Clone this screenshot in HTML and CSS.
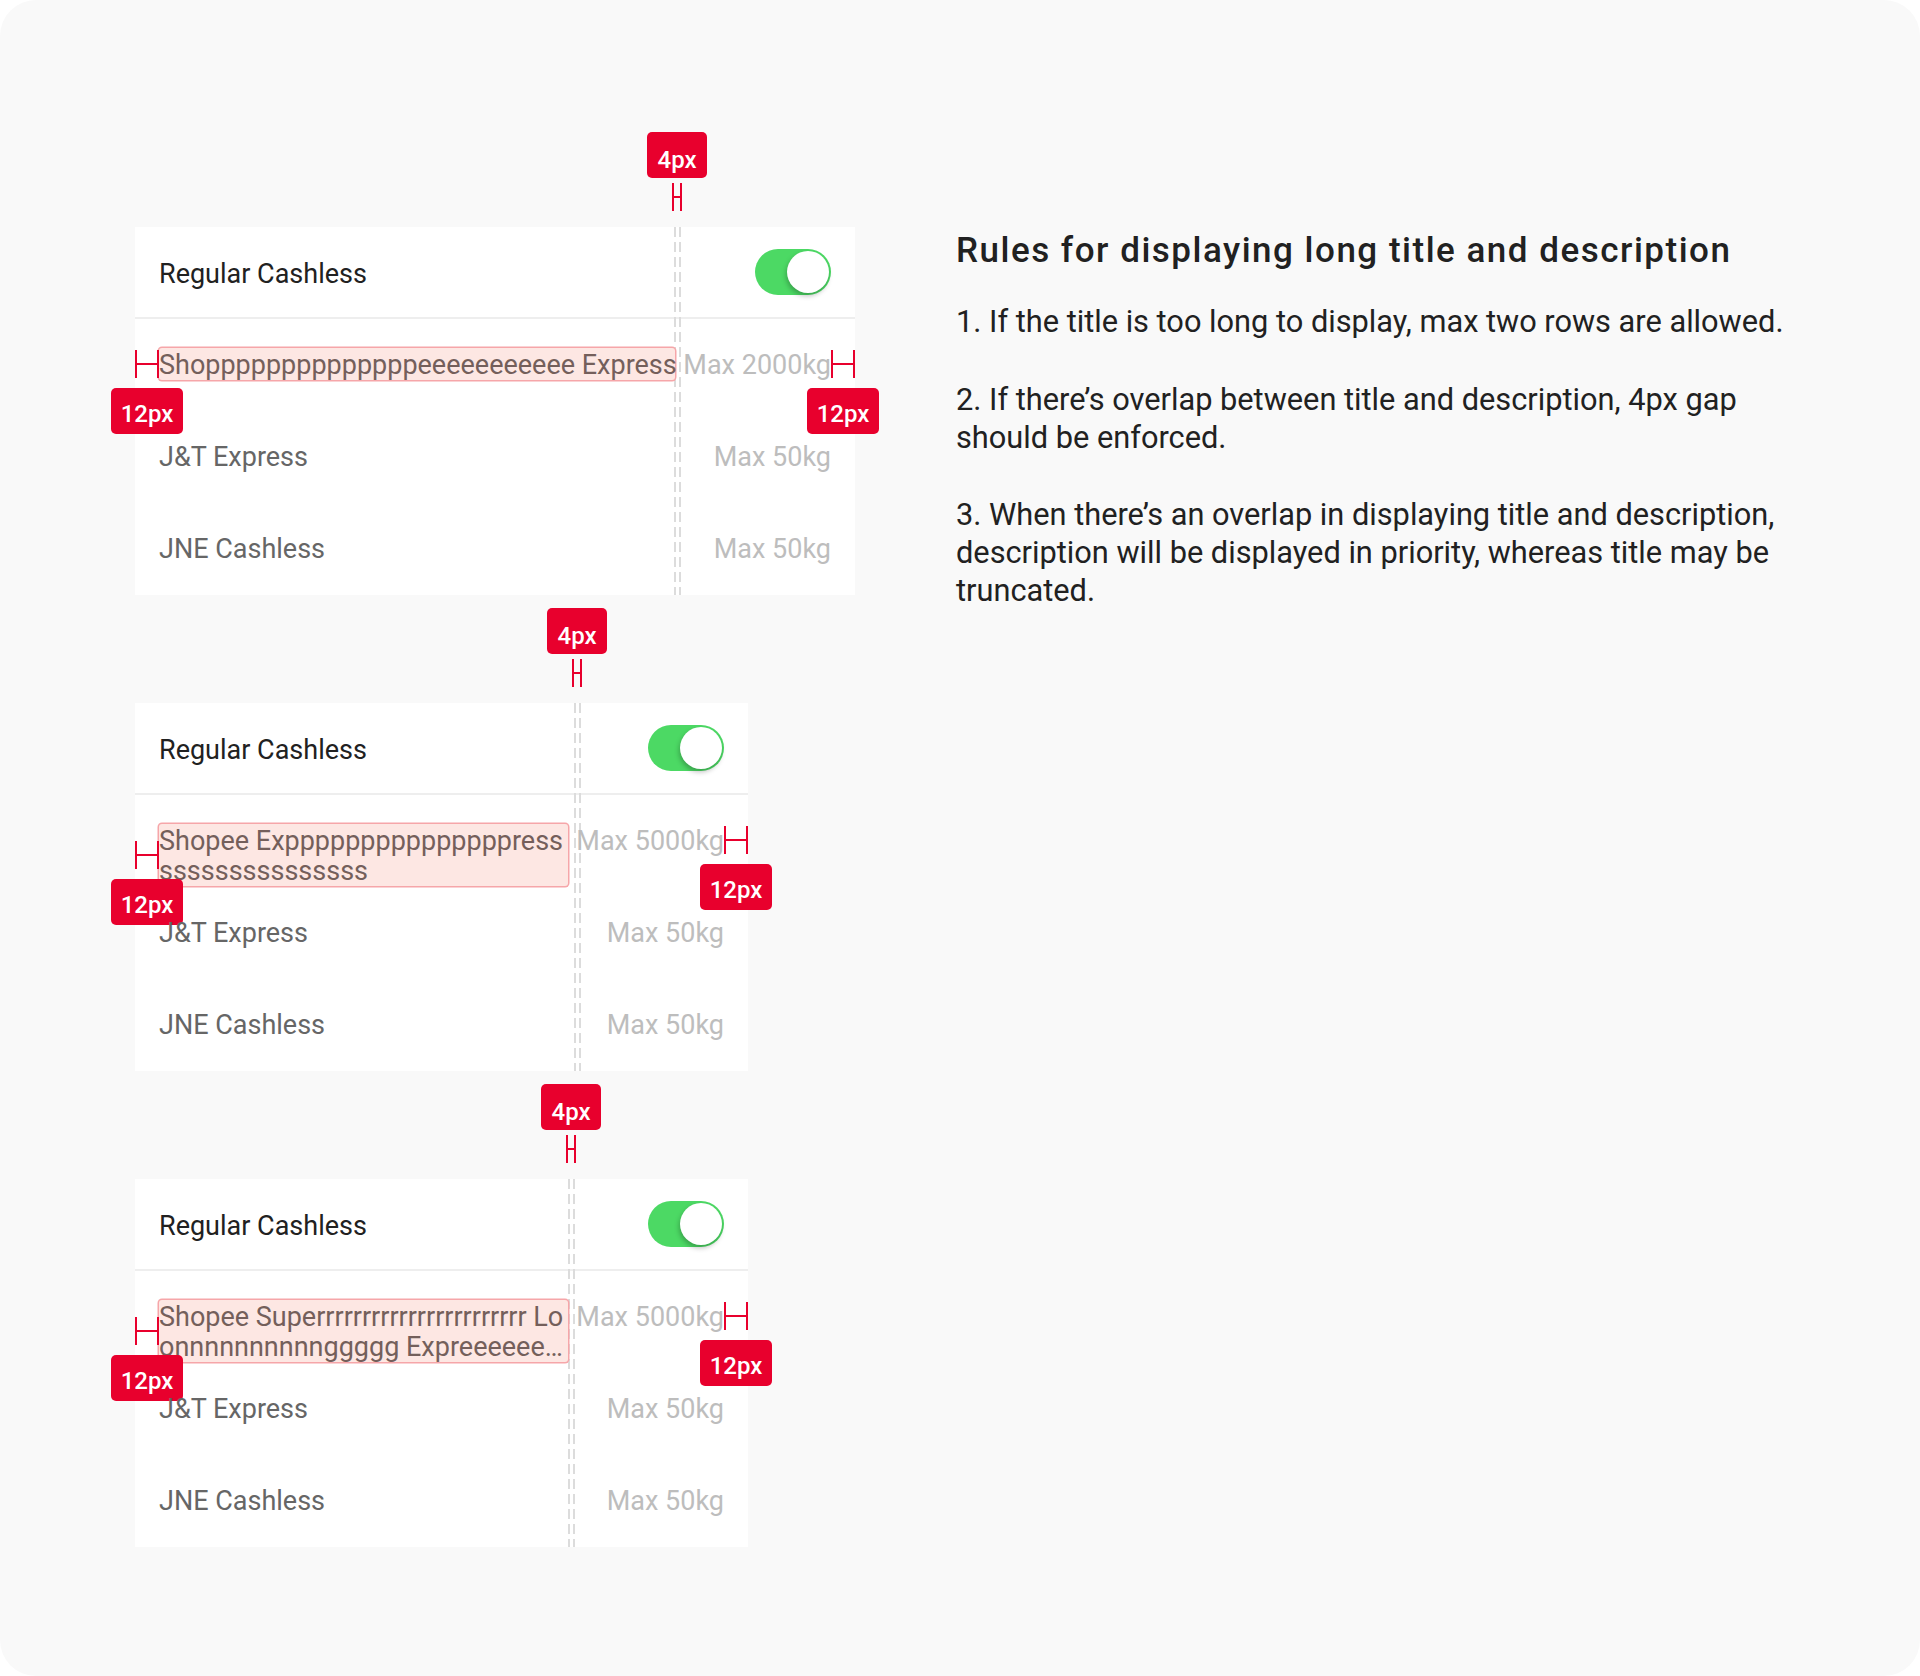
FILE: index.html
```html
<!DOCTYPE html>
<html lang="en">
<head>
  <meta charset="UTF-8">
  <meta name="viewport" content="width=device-width, initial-scale=1.0">
  <title>Long title and description rules</title>
  <link rel="stylesheet" href="styles.css">
</head>
<body>
  <div class="canvas">
    <div class="layout">
      <div class="examples">

        <section class="example">
          <div class="gap-note gap-note--one">
            <span class="badge badge--gap">4px</span>
            <span class="span-mark span-mark--narrow"></span>
            <span class="gap-lines"></span>
          </div>
          <div class="card card--wide">
            <div class="card-head">
              <span class="card-title">Regular Cashless</span>
              <span class="switch"><span class="switch-knob"></span></span>
            </div>
            <div class="row">
              <div class="row-title">
                <span class="row-text row-text--marked row-text--single">Shoppppppppppppppeeeeeeeeeee Express</span>
                <span class="side-note side-note--left"><span class="span-mark"></span><span class="badge">12px</span></span>
              </div>
              <div class="row-desc">Max 2000kg
                <span class="side-note side-note--right"><span class="span-mark"></span><span class="badge">12px</span></span>
              </div>
            </div>
            <div class="row">
              <div class="row-title"><span class="row-text">J&amp;T Express</span></div>
              <div class="row-desc">Max 50kg</div>
            </div>
            <div class="row">
              <div class="row-title"><span class="row-text">JNE Cashless</span></div>
              <div class="row-desc">Max 50kg</div>
            </div>
          </div>
        </section>

        <section class="example">
          <div class="gap-note gap-note--two">
            <span class="badge badge--gap">4px</span>
            <span class="span-mark span-mark--narrow"></span>
            <span class="gap-lines"></span>
          </div>
          <div class="card">
            <div class="card-head">
              <span class="card-title">Regular Cashless</span>
              <span class="switch"><span class="switch-knob"></span></span>
            </div>
            <div class="row">
              <div class="row-title">
                <span class="row-text row-text--marked row-text--clamp">Shopee Expppppppppppppppresssssssssssssssss</span>
                <span class="side-note side-note--left"><span class="span-mark"></span><span class="badge">12px</span></span>
              </div>
              <div class="row-desc">Max 5000kg
                <span class="side-note side-note--right"><span class="span-mark"></span><span class="badge">12px</span></span>
              </div>
            </div>
            <div class="row">
              <div class="row-title"><span class="row-text">J&amp;T Express</span></div>
              <div class="row-desc">Max 50kg</div>
            </div>
            <div class="row">
              <div class="row-title"><span class="row-text">JNE Cashless</span></div>
              <div class="row-desc">Max 50kg</div>
            </div>
          </div>
        </section>

        <section class="example">
          <div class="gap-note gap-note--three">
            <span class="badge badge--gap">4px</span>
            <span class="span-mark span-mark--narrow"></span>
            <span class="gap-lines"></span>
          </div>
          <div class="card">
            <div class="card-head">
              <span class="card-title">Regular Cashless</span>
              <span class="switch"><span class="switch-knob"></span></span>
            </div>
            <div class="row">
              <div class="row-title">
                <span class="row-text row-text--marked row-text--clamp">Shopee Superrrrrrrrrrrrrrrrrrrrrrr Loonnnnnnnnnnggggg Expreeeeeeeeeeeeeeeeeeeeeess</span>
                <span class="side-note side-note--left"><span class="span-mark"></span><span class="badge">12px</span></span>
              </div>
              <div class="row-desc">Max 5000kg
                <span class="side-note side-note--right"><span class="span-mark"></span><span class="badge">12px</span></span>
              </div>
            </div>
            <div class="row">
              <div class="row-title"><span class="row-text">J&amp;T Express</span></div>
              <div class="row-desc">Max 50kg</div>
            </div>
            <div class="row">
              <div class="row-title"><span class="row-text">JNE Cashless</span></div>
              <div class="row-desc">Max 50kg</div>
            </div>
          </div>
        </section>

      </div>

      <div class="rules">
        <h1 class="rules-title">Rules for displaying long title and description</h1>
        <p>1. If the title is too long to display, max two rows are allowed.</p>
        <p>2. If there’s overlap between title and description, 4px gap should be enforced.</p>
        <p>3. When there’s an overlap in displaying title and description, description will be displayed in priority, whereas title may be truncated.</p>
      </div>
    </div>
  </div>
</body>
</html>
```

FILE: styles.css
```css
:root {
  --canvas: #f9f9f9;
  --card: #ffffff;
  --ink: #212121;
  --ink-soft: #666666;
  --ink-faint: #bdbdbd;
  --line: #eeeeee;
  --mark: #e8002d;
  --toggle: #4cd964;
  --highlight: #fde7e3;
  --highlight-border: #f6a6a9;
}

* {
  margin: 0;
  padding: 0;
  box-sizing: border-box;
}

body {
  background: #ffffff;
  font-family: Roboto, 'Noto Sans', sans-serif;
  color: var(--ink);
}

.canvas {
  min-height: 1676px;
  background: var(--canvas);
  border-radius: 36px;
}

.layout {
  display: grid;
  grid-template-columns: 720px 840px;
  column-gap: 101px;
  padding: 132px 0 0 135px;
}

.examples {
  display: flex;
  flex-direction: column;
  gap: 13px;
}

.example {
  position: relative;
  padding-top: 95px;
}

/* annotation: gap between title and description */
.gap-note {
  position: absolute;
  top: 0;
  bottom: 0;
  width: 58px;
  display: flex;
  flex-direction: column;
  align-items: center;
}

.gap-note--one { left: 513px; }
.gap-note--two { left: 413px; }
.gap-note--three { left: 407px; }

.gap-note .span-mark {
  margin-top: 5px;
}

.gap-lines {
  flex: 1;
  width: 7px;
  margin-top: 16px;
  background:
    linear-gradient(#dcdcdc 10px, transparent 10px) left top / 2px 15px repeat-y,
    linear-gradient(#dcdcdc 10px, transparent 10px) right top / 2px 15px repeat-y;
}

.badge {
  display: flex;
  align-items: center;
  justify-content: center;
  height: 46px;
  padding: 6px 10px 0;
  border-radius: 5px;
  background: var(--mark);
  color: #ffffff;
  font-size: 24px;
  font-weight: 500;
  line-height: 1;
  white-space: nowrap;
}

.badge--gap {
  padding-top: 10px;
}

.span-mark {
  position: relative;
  display: block;
  width: 24px;
  height: 28px;
  border-left: 2px solid var(--mark);
  border-right: 2px solid var(--mark);
}

.span-mark::before {
  content: '';
  position: absolute;
  left: 0;
  right: 0;
  top: 13px;
  height: 2px;
  background: var(--mark);
}

.span-mark--narrow {
  width: 10px;
}

/* card */
.card {
  width: 613px;
  background: var(--card);
  font-size: 27px;
  line-height: 30px;
}

.card--wide {
  width: 720px;
}

.card-head {
  display: flex;
  align-items: center;
  justify-content: space-between;
  height: 92px;
  padding: 0 24px;
  border-bottom: 2px solid var(--line);
}

.card-title {
  padding-top: 4px;
  color: var(--ink);
}

.switch {
  position: relative;
  width: 76px;
  height: 46px;
  border-radius: 23px;
  background: var(--toggle);
}

.switch-knob {
  position: absolute;
  top: 2px;
  right: 2px;
  width: 42px;
  height: 42px;
  border-radius: 50%;
  background: #ffffff;
  box-shadow: -1px 3px 5px rgba(0, 0, 0, 0.25);
}

.row {
  display: flex;
  align-items: flex-start;
  justify-content: space-between;
  gap: 8px;
  height: 92px;
  padding: 29px 24px 0;
}

.row-title {
  position: relative;
  flex: 0 1 auto;
  min-width: 0;
}

.row-text {
  display: block;
  padding-top: 2px;
  color: var(--ink-soft);
}

.row-text--marked {
  color: #745f5b;
  background: var(--highlight);
  border-radius: 3px;
  box-shadow: 0 0 0 1.5px var(--highlight-border);
}

.row-text--single {
  white-space: nowrap;
}

.row-text--clamp {
  word-break: break-all;
  display: -webkit-box;
  -webkit-box-orient: vertical;
  -webkit-line-clamp: 2;
  overflow: hidden;
}

.row-desc {
  position: relative;
  flex: none;
  padding-top: 2px;
  white-space: nowrap;
  color: var(--ink-faint);
}

/* annotation: 12px side padding */
.side-note {
  position: absolute;
  display: flex;
  flex-direction: column;
  align-items: center;
  gap: 10px;
  width: 70px;
  white-space: nowrap;
}

.side-note--left {
  left: -47px;
  top: calc(50% - 14px);
}

.side-note--right {
  right: -47px;
  top: 2px;
}

/* rules text */
.rules {
  color: var(--ink);
}

.rules-title {
  margin-top: 98px;
  font-size: 35px;
  font-weight: 500;
  line-height: 42px;
  letter-spacing: 1.5px;
}

.rules p {
  font-size: 30.75px;
  line-height: 38px;
  margin-top: 39.5px;
}

.rules .rules-title + p {
  margin-top: 31px;
}
```
